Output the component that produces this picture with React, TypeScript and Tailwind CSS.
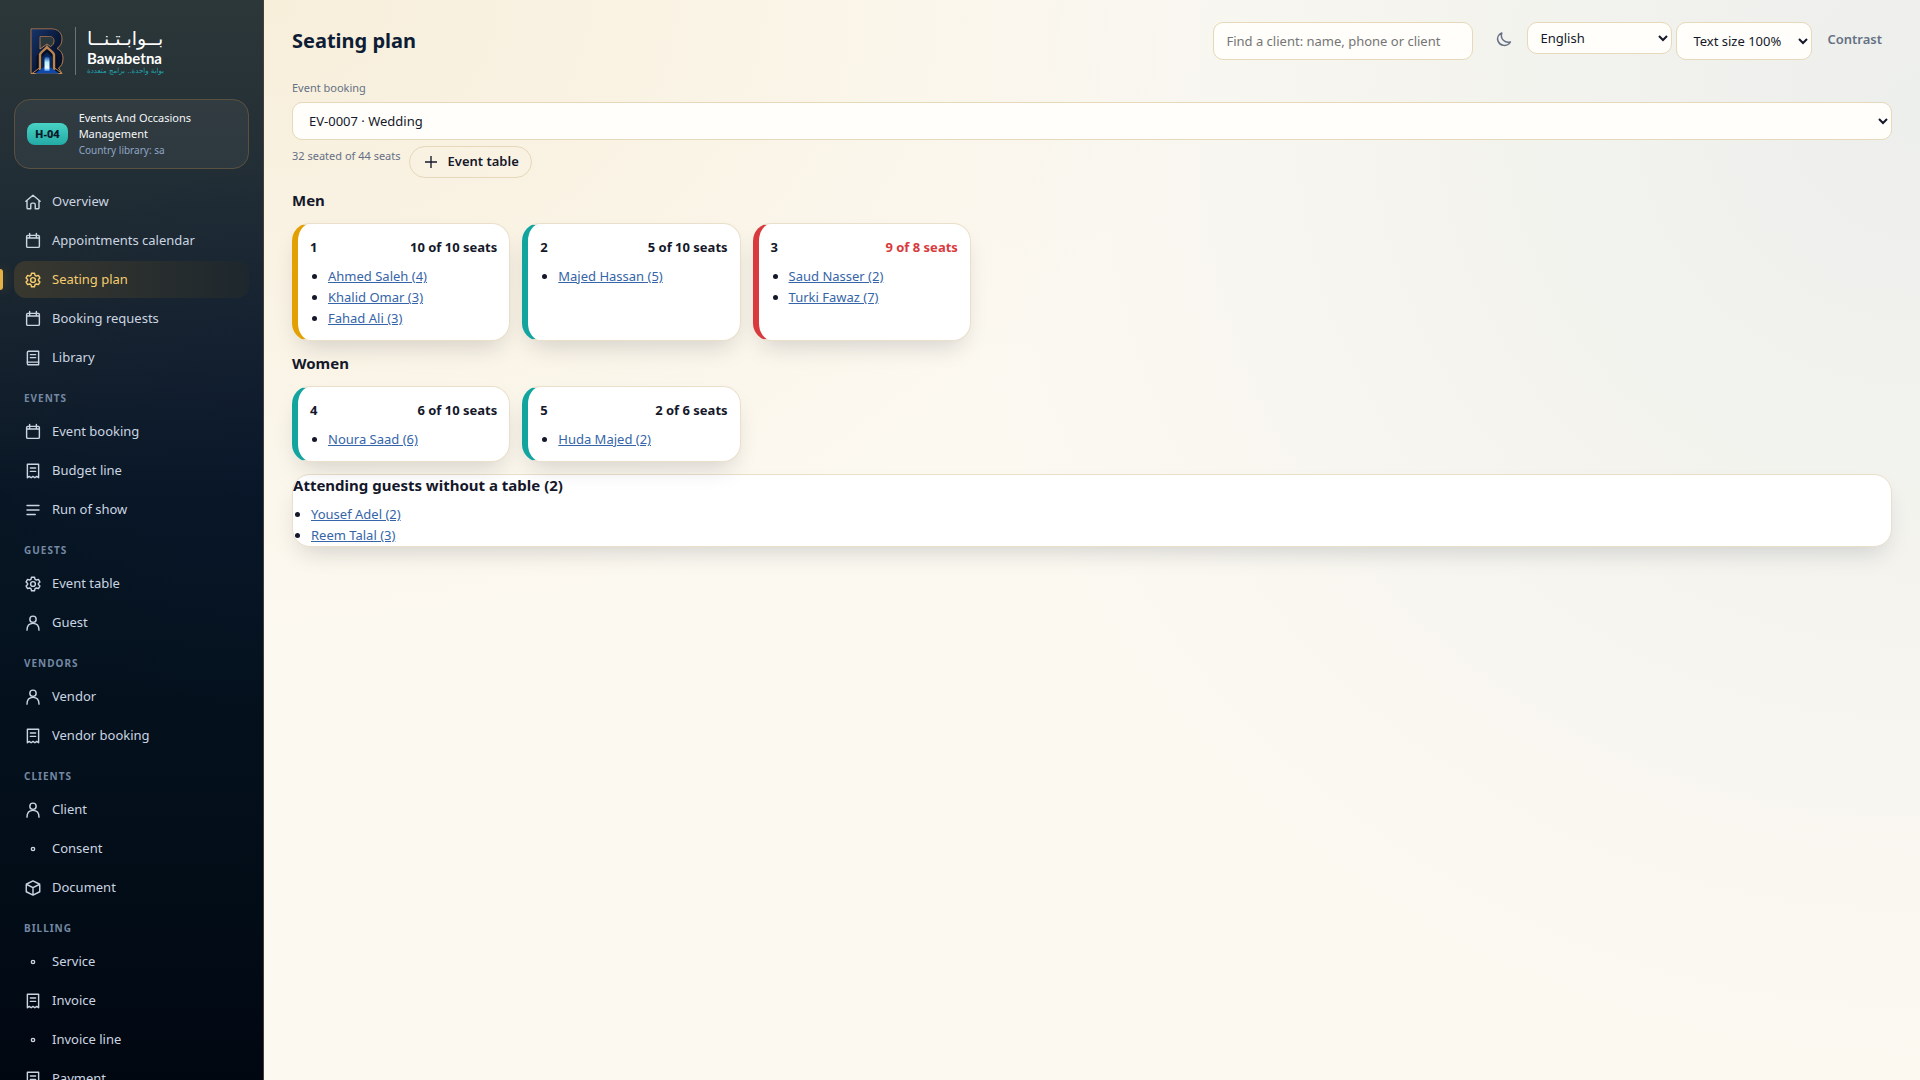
import * as React from "react";

type IconName = "home" | "calendar" | "gear" | "book" | "receipt" | "lines" | "person" | "dot" | "box";

const iconPaths: Record<IconName, React.ReactNode> = {
  home: <path d="M2.500 11 12 3l9.500 8M4 10v9.500A1.500 1.500 0 0 0 5.500 21H9v-5.500a2 2 0 0 1 2-2h2a2 2 0 0 1 2 2V21h3.500a1.500 1.500 0 0 0 1.500-1.500V10" />,
  calendar: (
    <>
      <rect x="3.500" y="4.500" width="17" height="16" rx="1.500" />
      <path d="M3.500 8h17M7.500 2v5M16.500 2v5" />
    </>
  ),
  gear: (
    <>
      <circle cx="12" cy="12" r="3.200" />
      <path d="M10 3h4l.7 2.700 1.800 1 2.700-.8 2 3.400-2 2v1.400l2 2-2 3.400-2.700-.8-1.800 1L14 21h-4l-.7-2.700-1.800-1-2.700.8-2-3.400 2-2v-1.400l-2-2 2-3.400 2.700.8 1.800-1z" />
    </>
  ),
  book: (
    <>
      <path d="M4.500 4.500A1.500 1.500 0 0 1 6 3h13.500v18H6a1.500 1.500 0 0 1-1.500-1.500z" />
      <path d="M4.500 17.500h15M8.500 7.500h7M8.500 11.500h7" />
    </>
  ),
  receipt: <path d="M4.500 3h15v18l-2.500-1.800-2.500 1.800-2.500-1.800L9.500 21 7 19.200 4.500 21zM8.500 8h7M8.500 12.500h7" />,
  lines: <path d="M4 6h16M4 12h16M4 18h11" />,
  person: (
    <>
      <circle cx="12" cy="7" r="4.200" />
      <path d="M4 21.500c0-6 3-9 8-9s8 3 8 9" />
    </>
  ),
  dot: <circle cx="12" cy="12" r="2.200" />,
  box: <path d="M12 2.500 21 7v10l-9 4.500L3 17V7zM3 7l9 4.500L21 7M12 11.500v10" />,
};

function Icon({ name }: { name: IconName }) {
  return (
    <svg
      viewBox="0 0 24 24"
      className="size-[18px] shrink-0"
      fill="none"
      stroke="currentColor"
      strokeWidth="1.900"
      strokeLinecap="round"
      strokeLinejoin="round"
      aria-hidden="true"
    >
      {iconPaths[name]}
    </svg>
  );
}

interface NavItem {
  label: string;
  icon: IconName;
  active?: boolean;
}

const navGroups: { title?: string; items: NavItem[] }[] = [
  {
    items: [
      { label: "Overview", icon: "home" },
      { label: "Appointments calendar", icon: "calendar" },
      { label: "Seating plan", icon: "gear", active: true },
      { label: "Booking requests", icon: "calendar" },
      { label: "Library", icon: "book" },
    ],
  },
  {
    title: "Events",
    items: [
      { label: "Event booking", icon: "calendar" },
      { label: "Budget line", icon: "receipt" },
      { label: "Run of show", icon: "lines" },
    ],
  },
  {
    title: "Guests",
    items: [
      { label: "Event table", icon: "gear" },
      { label: "Guest", icon: "person" },
    ],
  },
  {
    title: "Vendors",
    items: [
      { label: "Vendor", icon: "person" },
      { label: "Vendor booking", icon: "receipt" },
    ],
  },
  {
    title: "Clients",
    items: [
      { label: "Client", icon: "person" },
      { label: "Consent", icon: "dot" },
      { label: "Document", icon: "box" },
    ],
  },
  {
    title: "Billing",
    items: [
      { label: "Service", icon: "dot" },
      { label: "Invoice", icon: "receipt" },
      { label: "Invoice line", icon: "dot" },
      { label: "Payment", icon: "receipt" },
    ],
  },
];

type TableStatus = "full" | "open" | "over";

interface SeatingTable {
  number: number;
  seats: string;
  status: TableStatus;
  guests: string[];
}

const sections: { title: string; tables: SeatingTable[] }[] = [
  {
    title: "Men",
    tables: [
      {
        number: 1,
        seats: "10 of 10 seats",
        status: "full",
        guests: ["Ahmed Saleh (4)", "Khalid Omar (3)", "Fahad Ali (3)"],
      },
      { number: 2, seats: "5 of 10 seats", status: "open", guests: ["Majed Hassan (5)"] },
      { number: 3, seats: "9 of 8 seats", status: "over", guests: ["Saud Nasser (2)", "Turki Fawaz (7)"] },
    ],
  },
  {
    title: "Women",
    tables: [
      { number: 4, seats: "6 of 10 seats", status: "open", guests: ["Noura Saad (6)"] },
      { number: 5, seats: "2 of 6 seats", status: "open", guests: ["Huda Majed (2)"] },
    ],
  },
];

const statusBorder: Record<TableStatus, string> = {
  full: "border-l-[#e2a003]",
  open: "border-l-[#12a5a0]",
  over: "border-l-[#d83a3d]",
};

function Logo() {
  return (
    <a href="#home" className="ml-4 flex items-center gap-[11px]" aria-label="Bawabetna">
      <svg viewBox="0 0 34 46" className="h-[46px] w-[34px]" aria-hidden="true">
        <defs>
          <linearGradient id="navy" x1="0" y1="0" x2="1" y2="1">
            <stop offset="0" stopColor="#17366b" />
            <stop offset="0.500" stopColor="#0a1a3c" />
            <stop offset="1" stopColor="#050d22" />
          </linearGradient>
          <linearGradient id="copper" x1="0" y1="0" x2="0" y2="1">
            <stop offset="0" stopColor="#9a6a48" />
            <stop offset="1" stopColor="#c98a4c" />
          </linearGradient>
          <linearGradient id="glow" x1="0" y1="0" x2="0" y2="1">
            <stop offset="0" stopColor="#0b3f98" />
            <stop offset="0.400" stopColor="#bdf0ff" />
            <stop offset="0.800" stopColor="#e8fbff" />
            <stop offset="1" stopColor="#2c86f5" />
          </linearGradient>
        </defs>
        {/* letter body */}
        <path
          d="M1 .8h20c7 0 11 4 11 10.200 0 4.500-2 7.500-5 9.500 4 2 6 5.500 6 10 0 5-2 8-4.500 9.500L32 45.500H1z"
          fill="url(#navy)"
          stroke="url(#copper)"
        />
        <path d="M10 8.500h9.500c3.500 0 4.500 2.200 4.500 4.500 0 2.600-1.500 4.500-3.500 5.500L17 16l-7 5z" fill="#2a373d" stroke="url(#copper)" strokeWidth="0.900" />
        {/* arched gate */}
        <path d="M6.500 45.500V28L17 18l10.500 10v17.500z" fill="#050f24" />
        <path d="M10 42V26.500c1.500-3.500 5-4.500 7-7.500 2 3 5.500 4 7 7.500V42" fill="none" stroke="#b98352" strokeWidth="2.400" />
        <path d="M12 43V29l5-5 5 5v14z" fill="#092457" />
        <path d="m5 45.500 8-6h8l8 6z" fill="#1049a8" />
        <path d="M14.500 43V31a2.500 2.500 0 0 1 5 0v12z" fill="url(#glow)" />
        <path d="m2 45.500 8-6M32 45.500l-8-6" stroke="#b98352" />
      </svg>
      <span className="h-12 w-px bg-[#6d7478]" />
      <span className="flex w-[74px] flex-col items-start whitespace-nowrap text-white">
        <span lang="ar" dir="rtl" className="font-['DejaVu_Sans'] text-[19px] leading-6">
          بــوابـتـنــا
        </span>
        <span className="font-[Lato] text-[15px] leading-4 font-bold">Bawabetna</span>
        <span lang="ar" dir="rtl" className="font-['DejaVu_Sans'] text-[7px] leading-[10px] text-[#20a5b0]">
          بوابة واحدة.. برامج متعددة
        </span>
      </span>
    </a>
  );
}

function Sidebar() {
  return (
    <aside className="flex h-screen w-[264px] shrink-0 flex-col overflow-x-hidden overflow-y-auto border-r border-[#4a3f37] bg-[radial-gradient(circle_at_100%_40%,#08184033,transparent_40%),linear-gradient(180deg,#2c3739_0%,#222e35_16%,#14202c_34%,#081624_46%,#04111d_65%,#020c17_85%,#010711_100%)] px-[14px] pt-[26px] [scrollbar-width:none]">
      <Logo />
      <div className="mt-[23px] flex items-center gap-[11px] rounded-2xl border border-[#5b5140] bg-white/5 px-3 py-[10px]">
        <span className="shrink-0 rounded-lg bg-gradient-to-b from-[#48d3c4] to-[#22aaa5] px-2 py-[2px] text-[11px] leading-[18px] font-extrabold whitespace-nowrap text-[#07182a]">
          H-04
        </span>
        <div className="max-w-[130px] min-w-0 text-[11px] leading-4">
          <div className="text-[#f4f6f8]">Events And Occasions Management</div>
          <div className="text-[10px] text-[#90a5c4]">Country library: sa</div>
        </div>
      </div>
      <nav className="mt-[14px] flex flex-col gap-[2px]">
        {navGroups.map((group, i) => (
          <React.Fragment key={i}>
            {group.title && (
              <h2 className="mt-3 mb-1 px-[10px] text-[10px] leading-[17px] font-bold tracking-[1px] text-[#7488a3] uppercase">
                {group.title}
              </h2>
            )}
            {group.items.map((item) => (
              <a
                key={item.label}
                href="#nav"
                aria-current={item.active ? "page" : undefined}
                className={
                  item.active
                    ? "relative flex h-[37px] shrink-0 items-center gap-[10px] rounded-xl bg-gradient-to-r from-[#39382f] to-[#1d272d] px-[10px] text-[#f5cc6e] before:absolute before:top-2 before:-left-[14px] before:h-[21px] before:w-[3px] before:rounded-r before:bg-[#e5b045] before:shadow-[0_0_12px_#e5b04566]"
                    : "flex h-[37px] shrink-0 items-center gap-[10px] rounded-xl px-[10px] text-[#cbd5e1]"
                }
              >
                <Icon name={item.icon} />
                {item.label}
              </a>
            ))}
          </React.Fragment>
        ))}
      </nav>
    </aside>
  );
}

function GuestList({ guests }: { guests: string[] }) {
  return (
    <ul className="list-disc pl-[18px] leading-[21px] text-[#14182a]">
      {guests.map((guest) => (
        <li key={guest}>
          <a href="#guest" className="text-[#3565a8] underline">
            {guest}
          </a>
        </li>
      ))}
    </ul>
  );
}

function TableCard({ table }: { table: SeatingTable }) {
  return (
    <article
      className={`rounded-[18px] border border-l-[6px] border-[#eadfca] bg-white px-3 pt-3 pb-[11px] shadow-[0_12px_24px_-8px_#1018282e] ${statusBorder[table.status]}`}
    >
      <div className="mb-2 flex justify-between leading-[22px] font-bold">
        <span>{table.number}</span>
        <span className={table.status === "over" ? "text-[#d83a3d]" : ""}>{table.seats}</span>
      </div>
      <GuestList guests={table.guests} />
    </article>
  );
}

function Header() {
  return (
    <header className="flex items-start justify-between">
      <h1 className="mt-1 text-[20px] leading-[30px] font-bold text-[#0e1d35]">Seating plan</h1>
      <div className="flex items-start">
        <input
          type="search"
          aria-label="Find a client"
          placeholder="Find a client: name, phone or client"
          className="h-[38px] w-[260px] rounded-[10px] border border-[#e6d8b8] bg-[#fffefa] px-3 placeholder:text-[#757575]"
        />
        <button type="button" aria-label="Dark mode" className="mr-[14px] ml-[22px] flex h-[34px] w-[18px] items-center text-[#667085]">
          <svg
            viewBox="0 0 24 24"
            className="size-[18px]"
            fill="none"
            stroke="currentColor"
            strokeWidth="2"
            strokeLinejoin="round"
          >
            <path d="M20.500 16C13.500 18 6.500 12 9 4 4.500 6 2.500 10.500 4 14.500c2.500 7 12.500 8.500 16.500 1.500z" />
          </svg>
        </button>
        <select aria-label="Language" className="h-8 w-[145px] rounded-[10px] border border-[#e6d8b8] bg-[#fffefa] px-2">
          <option>English</option>
        </select>
        <select
          aria-label="Text size"
          className="ml-1 h-[38px] w-[136px] rounded-[10px] border border-[#e6d8b8] bg-[#fffefa] px-3"
        >
          <option>Text size 100%</option>
        </select>
        <button type="button" className="h-9 px-[15px] pr-[10px] font-semibold text-[#667085]">
          Contrast
        </button>
      </div>
    </header>
  );
}

export default function App() {
  return (
    <div className="flex h-screen overflow-hidden bg-[#fcf9f1] font-['Noto_Sans',sans-serif] text-[13px] text-[#14182a]">
      <Sidebar />
      <main className="flex-1 overflow-auto bg-[radial-gradient(ellipse_55%_60%_at_0%_0%,#e8c98a38,transparent),radial-gradient(ellipse_60%_90%_at_100%_10%,#3c78b414,transparent)] px-7 pt-[22px]">
        <Header />
        <div className="mt-[18px]">
          <label htmlFor="booking" className="block text-[11px] leading-5 text-[#667085]">
            Event booking
          </label>
          <select
            id="booking"
            className="mt-1 h-[38px] w-full rounded-[10px] border border-[#e6d8b8] bg-[#fffefa] px-3"
          >
            <option>EV-0007 · Wedding</option>
          </select>
        </div>
        <div className="mt-[6px] flex items-start gap-2">
          <span className="text-[11px] leading-5 text-[#667085]">32 seated of 44 seats</span>
          <button
            type="button"
            className="flex h-8 items-center gap-2 rounded-full border border-[#e6d8b8] px-3 font-semibold"
          >
            <svg viewBox="0 0 24 24" className="size-[18px]" fill="none" stroke="currentColor" strokeWidth="1.800">
              <path d="M12 4v16M4 12h16" />
            </svg>
            Event table
          </button>
        </div>
        {sections.map((section) => (
          <section key={section.title} className="mb-3">
            <h2 className="mt-3 mb-3 text-[15px] leading-[21px] font-bold">{section.title}</h2>
            <div className="grid grid-cols-[repeat(auto-fill,minmax(210px,1fr))] gap-3">
              {section.tables.map((table) => (
                <TableCard key={table.number} table={table} />
              ))}
            </div>
          </section>
        ))}
        <section className="overflow-hidden rounded-[18px] border border-[#eadfca] bg-white shadow-[0_12px_24px_-8px_#1018282e]">
          <h2 className="mb-2 text-[15px] leading-[21px] font-bold">Attending guests without a table (2)</h2>
          <GuestList guests={["Yousef Adel (2)", "Reem Talal (3)"]} />
        </section>
      </main>
    </div>
  );
}
